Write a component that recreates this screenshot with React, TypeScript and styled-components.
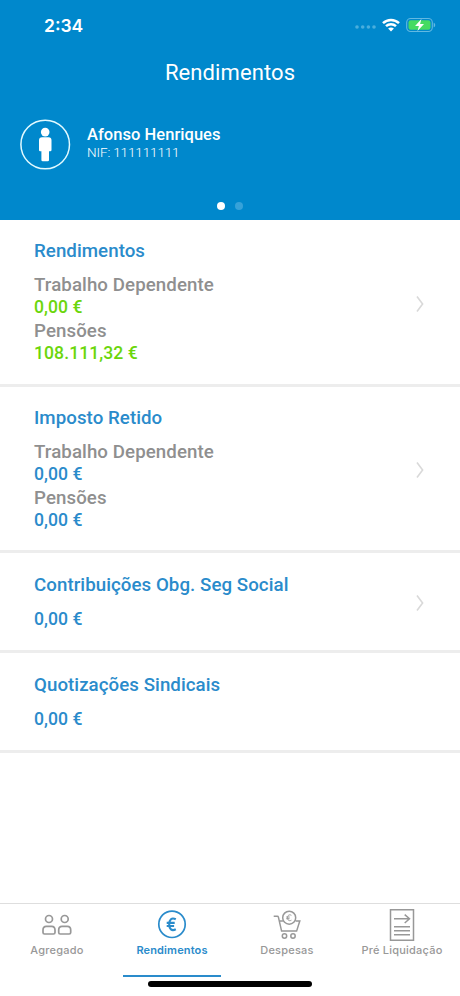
import React from 'react';
import styled, { createGlobalStyle } from 'styled-components';

const BLUE = '#0088cc';
const LINK = '#2a8bcb';
const GREY = '#8f8f8f';
const GREEN = '#6bd60b';

const GlobalStyle = createGlobalStyle`
  * { box-sizing: border-box; }
  body { margin: 0; background: #fff; font-family: Roboto, sans-serif; }
`;

const Screen = styled.div`
  width: 460px;
  height: 996px;
  display: flex;
  flex-direction: column;
  background: #fff;
  overflow: hidden;
`;

const Header = styled.header`
  height: 220px;
  flex: none;
  display: flex;
  flex-direction: column;
  background: ${BLUE};
  color: #fff;
`;

const StatusBar = styled.div`
  height: 50px;
  display: flex;
  align-items: center;
  justify-content: space-between;
  padding: 0 24px 0 44px;
`;

const Clock = styled.span`
  padding-top: 2px;
  font: 600 17.5px/20px Inter, sans-serif;
  letter-spacing: 0;
`;

const StatusIcons = styled.div`
  display: flex;
  align-items: center;
  gap: 6px;
`;

const PageTitle = styled.h1`
  margin: 8px 0 0;
  text-align: center;
  font-size: 22px;
  line-height: 30px;
  font-weight: 400;
  letter-spacing: 0.1px;
`;

const Profile = styled.div`
  display: flex;
  align-items: center;
  gap: 16px;
  margin-top: 31px;
  padding-left: 20px;
  height: 51px;
`;

const ProfileText = styled.div`
  display: flex;
  flex-direction: column;
  padding-bottom: 3px;
`;

const ProfileName = styled.span`
  font-size: 16.5px;
  line-height: 18px;
  font-weight: 500;
  letter-spacing: 0.04px;
`;

const ProfileId = styled.span`
  font-size: 13.5px;
  line-height: 17px;
  font-weight: 300;
  letter-spacing: -0.13px;
`;

const Pager = styled.div`
  display: flex;
  justify-content: center;
  gap: 10px;
  margin-top: 32px;
`;

const PagerDot = styled.span<{ $active?: boolean }>`
  width: 8px;
  height: 8px;
  border-radius: 50%;
  background: ${(p) => (p.$active ? '#fff' : '#36a2d9')};
`;

const List = styled.main`
  flex: 1;
`;

const Section = styled.section<{ $height: number }>`
  height: ${(p) => p.$height}px;
  display: flex;
  align-items: center;
  justify-content: space-between;
  padding: 0 35px 0 34px;
  border-bottom: 3px solid #ededed;
`;

const SectionBody = styled.div<{ $compact: boolean }>`
  height: 100%;
  padding-top: ${(p) => (p.$compact ? 21 : 20)}px;
`;

const SectionTitle = styled.h2`
  margin: 0;
  font-size: 18.7px;
  line-height: 22px;
  font-weight: 500;
  letter-spacing: 0.06px;
  color: ${LINK};
`;

const Entries = styled.div`
  margin-top: 12px;
`;

const Label = styled.div`
  font-size: 18.7px;
  line-height: 22px;
  font-weight: 500;
  letter-spacing: 0.08px;
  color: ${GREY};
`;

const Amount = styled.div<{ $color: string }>`
  font-size: 17.6px;
  line-height: 22px;
  margin-bottom: 2.4px;
  font-weight: 500;
  letter-spacing: 0.06px;
  color: ${(p) => p.$color};
`;

const TabBar = styled.nav`
  height: 93px;
  flex: none;
  display: grid;
  grid-template-columns: repeat(4, 115px);
  border-top: 1px solid #dedede;
  position: relative;
`;

const Tab = styled.div<{ $active?: boolean }>`
  height: 73px;
  margin: 0 9px 0 8px;
  display: flex;
  flex-direction: column;
  align-items: center;
  padding-top: 4px;
  color: ${(p) => (p.$active ? LINK : '#989898')};
  border-bottom: 2px solid ${(p) => (p.$active ? LINK : 'transparent')};
`;

const TabLabel = styled.span<{ $active?: boolean }>`
  font: ${(p) => (p.$active ? 600 : 500)} 11px/16px Inter, sans-serif;
  letter-spacing: ${(p) => (p.$active ? 0.14 : 0.22)}px;
  white-space: nowrap;
`;

const HomeIndicator = styled.div`
  position: absolute;
  left: 148px;
  bottom: 9px;
  width: 164px;
  height: 6px;
  border-radius: 3px;
  background: #000;
`;

const StatusGlyphs = () => (
  <StatusIcons>
    <svg width="21" height="8" viewBox="0 0 21 8" fill="#4aaedd">
      {[2, 7.7, 13.4, 19].map((x) => (
        <circle key={x} cx={x} cy="6" r="1.8" />
      ))}
    </svg>
    <svg width="18" height="14" viewBox="0 0 18 14" fill="none" stroke="#fff" strokeWidth="2.5">
      <path d="M1 5.2C5.5 .8 12.5 .8 17 5.2M4 8.2c2.8-2.7 7.2-2.7 10 0" />
      <path d="M9 13.5 6.1 10.6c1.6-1.5 4.2-1.5 5.8 0z" fill="#fff" stroke="none" />
    </svg>
    <svg width="30" height="16" viewBox="0 0 30 16">
      <rect x=".7" y="1.5" width="25.6" height="13" rx="4" fill="none" stroke="#62b9e2" strokeWidth="1.1" />
      <rect x="2.5" y="3.3" width="22" height="9.4" rx="2.2" fill="#45db61" />
      <path d="M27.7 5.7c2 .7 2 3.9 0 4.6z" fill="#62b9e2" />
      <path d="m15.4 2-6.3 6.9h3.8l-1.4 5.2 6.5-7h-3.900z" fill="#fff" />
    </svg>
  </StatusIcons>
);

const PersonIcon = () => (
  <svg width="51" height="51" viewBox="0 0 51 51">
    <circle cx="25.2" cy="25.5" r="24.3" fill="none" stroke="#e2faff" strokeWidth="1.5" />
    <circle cx="25.2" cy="13.1" r="4.3" fill="#fff" />
    <path d="M22 18.3h6.5q3 0 3 3V31q0 1.3-1.3 1.3H29V41q0 1.3-1.3 1.3h-5Q21.4 42.3 21.4 41v-8.7h-1.2Q19 32.3 19 31v-9.7q0-3 3-3z" fill="#fff" />
  </svg>
);

const ChevronSvg = styled.svg`
  margin-top: 3px;
`;

const Chevron = () => (
  <ChevronSvg width="10" height="18" viewBox="0 0 10 18" fill="none" stroke="#d9d9d9" strokeWidth="1.6">
    <path d="m2 1.5 5.6 7.5-5.6 7.5" />
  </ChevronSvg>
);

const PeopleIcon = () => (
  <svg width="32" height="34" viewBox="0 0 32 34" fill="none" stroke="currentColor" strokeWidth="1.7">
    <circle cx="8" cy="11" r="3.5" />
    <circle cx="23.7" cy="11" r="3.5" />
    <path d="M5.3 18.3h5.4q3.3 0 3.3 3.7v2.5q0 1.5-1.5 1.5h-9Q2 26 2 24.5V22q0-3.7 3.3-3.7zM21 18.3h5.4q3.3 0 3.3 3.7v2.5q0 1.5-1.5 1.5h-9q-1.5 0-1.5-1.5V22q0-3.7 3.3-3.7z" />
  </svg>
);

const EuroIcon = () => (
  <svg width="32" height="34" viewBox="0 0 32 34" fill="none" stroke="currentColor">
    <circle cx="16" cy="16.3" r="13.2" strokeWidth="1.7" />
    <path d="M19.8 11.3c-4.2-2.2-6.6.3-6.6 5s2.4 7.2 6.6 5M10.7 14.9h8M10.7 18h7.4" strokeWidth="2.1" />
  </svg>
);

const CartIcon = () => (
  <svg width="32" height="34" viewBox="-1.2 0 32 34" fill="none" stroke="currentColor" strokeWidth="1.5">
    <path d="M1.5 8.2h3.6q.9 0 1.1.9l3.2 14h15l3.2-10.2h-4M7.3 12.9h3.4" />
    <circle cx="17" cy="9.7" r="6.5" />
    <path d="M19.2 7.3c-2.2-1.2-3.9.1-3.9 2.5s1.7 3.6 3.9 2.4M14 9h3.5M14 10.7h3.3" strokeWidth="1" />
    <circle cx="12.3" cy="28" r="2.2" />
    <circle cx="20.8" cy="28" r="2.2" />
  </svg>
);

const DocumentIcon = () => (
  <svg width="32" height="34" viewBox="0 0 32 34" fill="none" stroke="currentColor" strokeWidth="1.5">
    <path d="M4.5 1.8h23v30.4h-23zM8 10.8h15.5M18.7 6.6l4.8 4.2-4.8 4.2M8 18.8h16M8 22.8h16M8 26.8h16" />
  </svg>
);

type Entry = { label?: string; amount: string };
type SectionData = { title: string; height: number; color: string; link: boolean; entries: Entry[] };

const sections: SectionData[] = [
  {
    title: 'Rendimentos', height: 167, color: GREEN, link: true,
    entries: [{ label: 'Trabalho Dependente', amount: '0,00 €' }, { label: 'Pensões', amount: '108.111,32 €' }],
  },
  {
    title: 'Imposto Retido', height: 166, color: LINK, link: true,
    entries: [{ label: 'Trabalho Dependente', amount: '0,00 €' }, { label: 'Pensões', amount: '0,00 €' }],
  },
  { title: 'Contribuições Obg. Seg Social', height: 100, color: LINK, link: true, entries: [{ amount: '0,00 €' }] },
  { title: 'Quotizações Sindicais', height: 100, color: LINK, link: false, entries: [{ amount: '0,00 €' }] },
];

const tabs = [
  { label: 'Agregado', Icon: PeopleIcon },
  { label: 'Rendimentos', Icon: EuroIcon, active: true },
  { label: 'Despesas', Icon: CartIcon },
  { label: 'Pré Liquidação', Icon: DocumentIcon },
];

export default function App() {
  return (
    <Screen>
      <GlobalStyle />
      <Header>
        <StatusBar>
          <Clock>2:34</Clock>
          <StatusGlyphs />
        </StatusBar>
        <PageTitle>Rendimentos</PageTitle>
        <Profile>
          <PersonIcon />
          <ProfileText>
            <ProfileName>Afonso Henriques</ProfileName>
            <ProfileId>NIF: 111111111</ProfileId>
          </ProfileText>
        </Profile>
        <Pager>
          <PagerDot $active />
          <PagerDot />
        </Pager>
      </Header>
      <List>
        {sections.map((s) => (
          <Section key={s.title} $height={s.height}>
            <SectionBody $compact={s.entries.length === 1}>
              <SectionTitle>{s.title}</SectionTitle>
              <Entries>
                {s.entries.map((e, i) => (
                  <React.Fragment key={i}>
                    {e.label && <Label>{e.label}</Label>}
                    <Amount $color={s.color}>{e.amount}</Amount>
                  </React.Fragment>
                ))}
              </Entries>
            </SectionBody>
            {s.link && <Chevron />}
          </Section>
        ))}
      </List>
      <TabBar>
        {tabs.map(({ label, Icon, active }) => (
          <Tab key={label} $active={active}>
            <Icon />
            <TabLabel $active={active}>{label}</TabLabel>
          </Tab>
        ))}
        <HomeIndicator />
      </TabBar>
    </Screen>
  );
}
